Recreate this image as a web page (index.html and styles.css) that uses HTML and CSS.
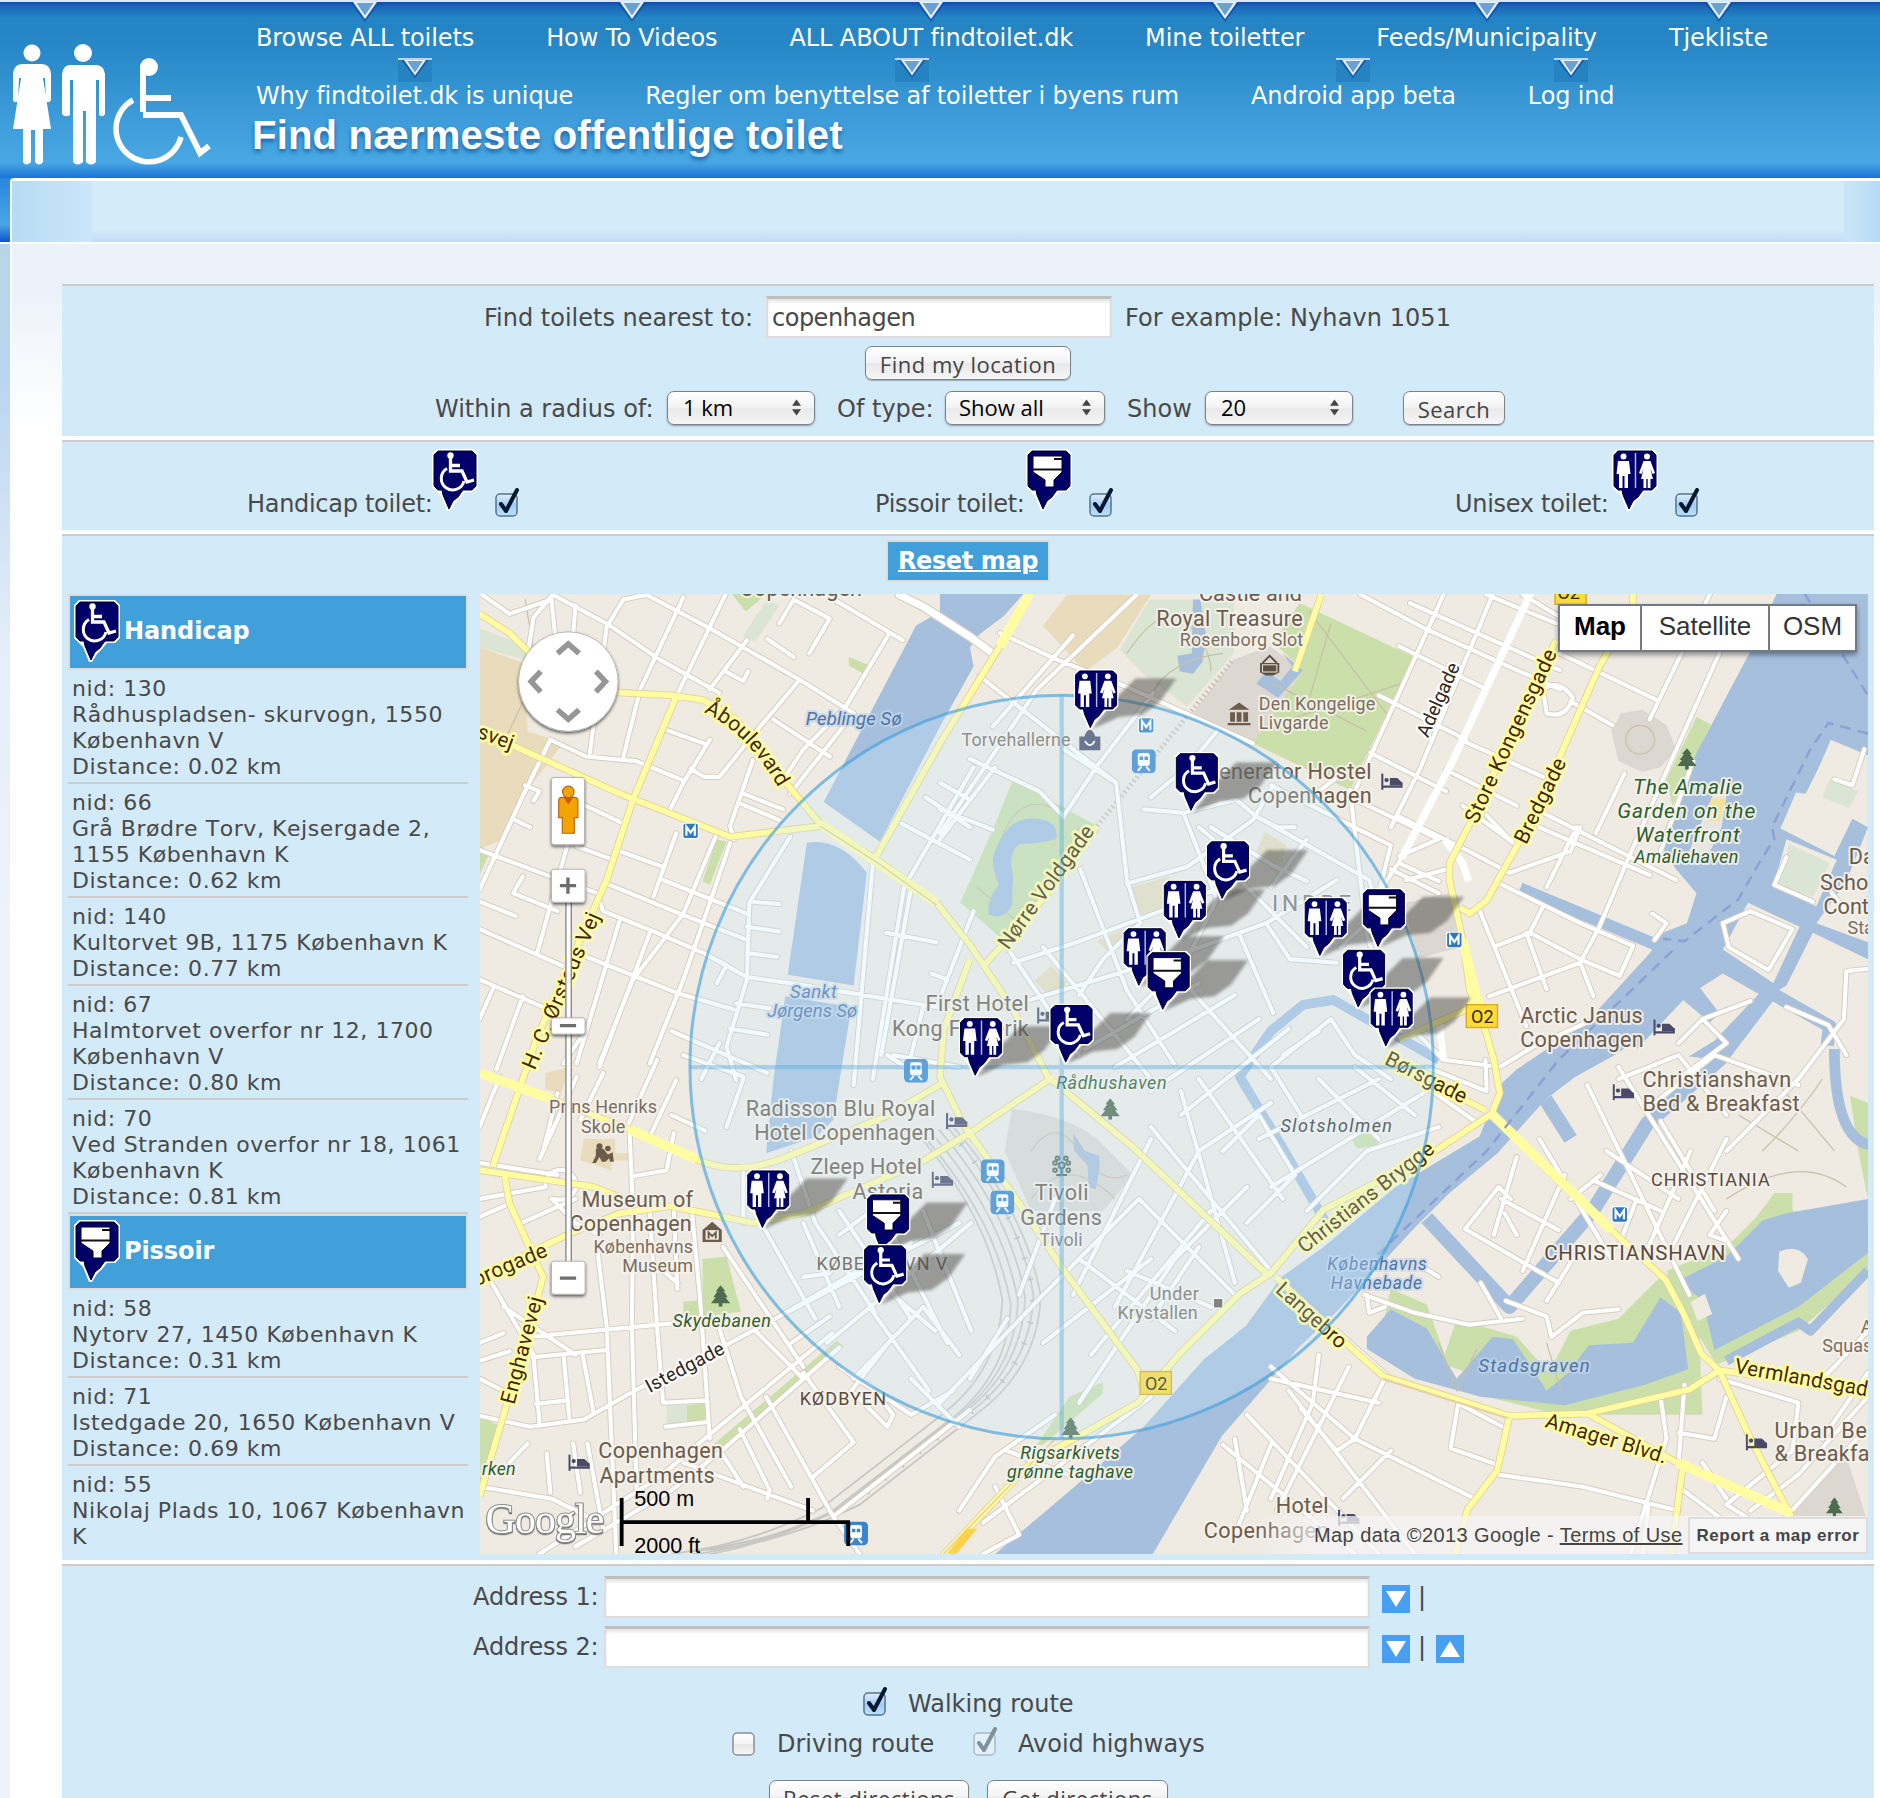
FILE: index.html
```html
<!DOCTYPE html>
<html lang="da">
<head>
<meta charset="utf-8">
<title>Find nærmeste offentlige toilet</title>
<link rel="stylesheet" href="styles.css">
</head>
<body>
<svg class="defs" width="0" height="0" aria-hidden="true">
  <defs>
    <linearGradient id="gloss" x1="0" y1="0" x2="0" y2="1"><stop offset="0" stop-color="#fff"/><stop offset=".5" stop-color="#f4f4f4"/><stop offset=".52" stop-color="#e8e8e8"/><stop offset="1" stop-color="#f7f7f7"/></linearGradient>
    <linearGradient id="aqua" x1="0" y1="0" x2="0" y2="1"><stop offset="0" stop-color="#e2effb"/><stop offset=".5" stop-color="#a3cdf3"/><stop offset="1" stop-color="#b9e2fb"/></linearGradient>
    <symbol id="pin" viewBox="0 0 46 62">
      <path d="M5 0H41L46 5V38L41 43H33L28 49L23 54L18 62H15L9 47L5 43L0 38V5Z" fill="#fff"/>
      <path d="M6 2H40L44 6V37L40 41H31L26 48L21 52L17 60L11 46L10 41H6L2 37V6Z" fill="#000068" stroke="#00001c" stroke-width="1"/>
    </symbol>
    <symbol id="pin-h" viewBox="0 0 46 62">
      <use href="#pin"/>
      <circle cx="18.500" cy="6.500" r="3.200" fill="#fff"/>
      <path d="M18.500 8V22H30L35 33L42 31M18.500 16.500H28" fill="none" stroke="#fff" stroke-width="3.300"/>
      <path d="M15 19.500A11.500 11.500 0 1 0 32 32" fill="none" stroke="#fff" stroke-width="3"/>
    </symbol>
    <symbol id="pin-p" viewBox="0 0 46 62">
      <use href="#pin"/>
      <path d="M7 7H36V23L28 31V38H19V31L7 23Z" fill="#fff" stroke="#00001c" stroke-width="1"/>
      <path d="M7 20.500H36M28 10H36" stroke="#111" stroke-width="2"/>
    </symbol>
    <symbol id="pin-u" viewBox="0 0 46 62">
      <use href="#pin"/>
      <path d="M23.500 4V39" stroke="#b9b9e0" stroke-width="1.500"/>
      <g fill="#fff"><circle cx="11.500" cy="7.500" r="3"/><path d="M6 12H17L18.500 25H16V39H12.500V27H10.500V39H7V25H4.500Z"/>
      <circle cx="35" cy="7.500" r="3"/><path d="M31.500 12H38.500L43 24L40.500 25L38.500 20L41 30H38.500V39H35.700V30H34.300V39H31.500V30H29L31.500 20L29.500 25L27 24Z"/></g>
    </symbol>
    <symbol id="shadow" viewBox="0 0 80 50"><path d="M2 48L14 32L24 20L38 6H72L58 26L44 36L24 38Z" fill="#3c3a36" opacity=".45" filter="url(#soft)"/></symbol>
    <filter id="soft"><feGaussianBlur stdDeviation="1.300"/></filter>
    <filter id="drop" x="-20%" y="-20%" width="140%" height="150%"><feDropShadow dx="0" dy="1.500" stdDeviation="1.500" flood-opacity=".6"/></filter>
    <symbol id="check-on" viewBox="0 0 26 30"><rect x="1" y="6" width="21" height="22" rx="4" fill="url(#aqua)" stroke="#5a7390" stroke-width="1.500"/><path d="M6 16L11 23L22 2" fill="none" stroke="#04182f" stroke-width="4" stroke-linecap="round" stroke-linejoin="round"/></symbol>
    <symbol id="check-dim" viewBox="0 0 26 30"><rect x="1" y="6" width="21" height="22" rx="4" fill="#e3f0f8" stroke="#a9bac5" stroke-width="1.500"/><path d="M6 16L11 23L22 2" fill="none" stroke="#7f929e" stroke-width="4" stroke-linecap="round" stroke-linejoin="round"/></symbol>
    <symbol id="check-off" viewBox="0 0 26 30"><rect x="1" y="6" width="21" height="22" rx="4" fill="url(#gloss)" stroke="#8b8f93" stroke-width="1.500"/></symbol>
    <symbol id="updown" viewBox="0 0 10 18"><path d="M0 7L5 0L10 7ZM0 11L5 18L10 11Z" fill="#444"/></symbol>
    <symbol id="nav-tip" viewBox="0 0 34 24"><path d="M2 0H32L17 20Z" fill="#0f4fa8" opacity=".7"/><path d="M5 0H29L17 17Z" fill="#e9f1fa"/><path d="M8.500 1H25.500L17 13.500Z" fill="#6c9fd2"/></symbol>
    <symbol id="bed" viewBox="0 0 20 15"><path d="M1 0V15M1 12H19V8" fill="none" stroke="#4a4a68" stroke-width="2"/><circle cx="5" cy="6" r="2" fill="#4a4a68"/><path d="M8 4H15L19 8V11H8Z" fill="#4a4a68"/></symbol>
    <symbol id="tree" viewBox="0 0 16 18"><path d="M8 0L12 5H10.500L14 10H12L16 15H9.500V18H6.500V15H0L4 10H2L5.500 5H4Z" fill="#4d6b4e"/></symbol>
    <symbol id="metro" viewBox="0 0 14 14"><rect width="14" height="14" rx="2" fill="#fff"/><rect x="1" y="1" width="12" height="12" rx="1.500" fill="#3079c0"/><path d="M3.500 11V3.500L7 8.500L10.500 3.500V11" fill="none" stroke="#fff" stroke-width="1.800"/></symbol>
    <symbol id="train" viewBox="0 0 20 20"><rect width="20" height="20" rx="4" fill="#3a86cc"/><rect x="5" y="3" width="10" height="11" rx="2" fill="#fff"/><path d="M6.500 6H9.400V9H6.500ZM10.600 6H13.500V9H10.600Z" fill="#3a86cc"/><path d="M5 18L8 14.500M15 18L12 14.500" stroke="#fff" stroke-width="1.600"/></symbol>
  </defs>
</svg>

<div class="page">
  <header class="header">
    <svg class="logo" width="206" height="124" viewBox="0 0 206 124" fill="#fff">
      <circle cx="24" cy="9" r="8.500"/>
      <path d="M14 20H34Q42 20 43 30V56Q41 60 38 57L37 34H35L43 85H35V118Q31 123 27 118V86H23V118Q18 123 15 118V85H5L13 34H11L10 57Q6 60 5 56V30Q6 20 14 20Z"/>
      <circle cx="75" cy="9" r="9"/>
      <path d="M61 21H89Q96 22 97 30V70Q95 74 91 71V36H88V118Q83 123 78 118V67H75V118Q69 123 65 118V36H62V71Q57 74 54 70V30Q55 22 61 21Z"/>
      <circle cx="141" cy="23" r="9"/><path d="M132 22H138V68H132Z"/>
      <path d="M135 54H163M135 71H173L192 109L201 102" fill="none" stroke="#fff" stroke-width="6"/>
      <path d="M125 56A33 33 0 1 0 173 93" fill="none" stroke="#fff" stroke-width="5.500"/>
    </svg>
    <div class="head-main">
      <nav class="nav">
        <ul class="nav-row first">
          <li><svg><use href="#nav-tip"/></svg>Browse ALL toilets</li><li><svg><use href="#nav-tip"/></svg>How To Videos</li><li><svg><use href="#nav-tip"/></svg>ALL ABOUT findtoilet.dk</li><li><svg><use href="#nav-tip"/></svg>Mine toiletter</li><li><svg><use href="#nav-tip"/></svg>Feeds/Municipality</li><li><svg><use href="#nav-tip"/></svg>Tjekliste</li>
        </ul>
        <ul class="nav-row second">
          <li><svg><use href="#nav-tip"/></svg>Why findtoilet.dk is unique</li><li><svg><use href="#nav-tip"/></svg>Regler om benyttelse af toiletter i byens rum</li><li><svg><use href="#nav-tip"/></svg>Android app beta</li><li><svg><use href="#nav-tip"/></svg>Log ind</li>
        </ul>
      </nav>
      <h1>Find nærmeste offentlige toilet</h1>
    </div>
  </header>
  <div class="band"><div class="band-panel"><i class="corner-l"></i><i class="corner-r"></i></div></div>

  <main class="content">
    <div class="content-panel">
      <section class="box search">
        <div class="row r1"><label>Find toilets nearest to:</label><input class="field near" value="copenhagen"><span class="hint">For example: Nyhavn 1051</span></div>
        <div class="row r2"><button class="btn locate">Find my location</button></div>
        <div class="row r3">
          <label class="l-radius">Within a radius of:</label><span class="select">1 km<svg><use href="#updown"/></svg></span>
          <label class="l-type">Of type:</label><span class="select wide">Show all<svg><use href="#updown"/></svg></span>
          <label class="l-show">Show</label><span class="select">20<svg><use href="#updown"/></svg></span>
          <button class="btn go">Search</button>
        </div>
      </section>

      <section class="box types">
        <div class="type t1"><label>Handicap toilet:</label><svg class="pin"><use href="#pin-h"/></svg><svg class="check"><use href="#check-on"/></svg></div>
        <div class="type t2"><label>Pissoir toilet:</label><svg class="pin"><use href="#pin-p"/></svg><svg class="check"><use href="#check-on"/></svg></div>
        <div class="type t3"><label>Unisex toilet:</label><svg class="pin"><use href="#pin-u"/></svg><svg class="check"><use href="#check-on"/></svg></div>
      </section>

      <section class="box mapbox">
        <div class="reset-row"><a class="reset">Reset map</a></div>
        <div class="split">
          <div class="list">
            <h2><svg class="pin"><use href="#pin-h"/></svg>Handicap</h2>
            <div class="item">nid: 130<br>Rådhuspladsen- skurvogn, 1550<br>København V<br>Distance: 0.02 km</div>
            <div class="item">nid: 66<br>Grå Brødre Torv, Kejsergade 2,<br>1155 København K<br>Distance: 0.62 km</div>
            <div class="item">nid: 140<br>Kultorvet 9B, 1175 København K<br>Distance: 0.77 km</div>
            <div class="item">nid: 67<br>Halmtorvet overfor nr 12, 1700<br>København V<br>Distance: 0.80 km</div>
            <div class="item">nid: 70<br>Ved Stranden overfor nr 18, 1061<br>København K<br>Distance: 0.81 km</div>
            <h2><svg class="pin"><use href="#pin-p"/></svg>Pissoir</h2>
            <div class="item">nid: 58<br>Nytorv 27, 1450 København K<br>Distance: 0.31 km</div>
            <div class="item">nid: 71<br>Istedgade 20, 1650 København V<br>Distance: 0.69 km</div>
            <div class="item">nid: 55<br>Nikolaj Plads 10, 1067 København<br>K<br>Distance: 0.81 km</div>
          </div>
          <div class="map">
            <svg class="tiles" viewBox="400.350 495.450 1157.700 800.700" preserveAspectRatio="none">
              <rect x="400" y="495" width="1160" height="803" fill="#efeae2"/>
              <!-- built-up blocks and schools -->
              <g fill="#e8dcbc">
                <path d="M400 540L437 553L440 610L470 620L436 664L420 700L400 708Z"/><path d="M890 496H960L932 540L905 560L870 522Z"/>
                <path d="M455 895L475 890L468 912L455 908Z"/><path d="M487 950H513V962H524V968H510V976L484 968Z"/>
                <path d="M944 740L975 731L980 762L950 763ZM915 785L948 770V780L925 794ZM863 818L877 806L890 820L876 832ZM1055 694L1073 705L1066 730L1047 712Z"/>
              </g>
              <g fill="#dcd7d0">
                <path d="M1029 550L1059 539L1087 559L1045 620L995 595Z"/><path d="M1344 610L1352 595L1370 592L1390 605L1398 625L1385 640L1370 644L1350 635Z"/>
                <path d="M1172 753L1209 745L1218 790L1180 800Z"/><path d="M844 925Q890 930 915 950L945 980L920 1010L860 1010L838 960Z"/><path d="M1540 1215L1558 1270V1296H1490V1260Z"/>
              </g>
              <!-- parks -->
              <g fill="#cadfaa">
                <path d="M845 650L915 689L840 787L801 753L828 692Z"/><path d="M1084 503L1179 548L1126 659L1045 620L1087 559L1062 536Z"/>
                <path d="M586 1050L606 1048L618 1094L570 1100V1086L586 1084Z"/><path d="M573 1172L588 1170V1186L573 1187Z"/>
                <path d="M1415 598L1427 604L1395 672L1390 650Z"/><path d="M610 495H640L622 510Z"/><path d="M598 700L606 702L592 738L586 735Z"/>
                <path d="M708 548L725 555L720 562L708 555Z"/><path d="M400 705L408 712L400 730Z"/><path d="M400 1181L418 1190L404 1240H400Z"/>
                <path d="M1134 934L1146 940L1150 955L1132 958L1126 948Z"/><path d="M700 875L695 893L660 895Z"/><path d="M892 1165L920 1153V1162L870 1205H865Z"/>
                <path d="M1543 914L1558 920V1000L1550 960Z"/><path d="M1160 1075L1190 1088L1205 1130L1215 1100L1265 1115L1292 1145L1310 1110L1350 1100L1385 1065L1415 1055L1420 1180L1300 1180L1240 1165V1150L1150 1120Z"/>
                <path d="M1390 1060L1440 1040L1465 1015L1480 995H1495V1010L1558 1020V1060L1500 1110L1432 1138L1408 1100Z"/>
                <path d="M698 1118L704 1123L600 1208L596 1204Z"/>
              </g>
              <g fill="#dae5d3"><path d="M959 500L1029 500L1029 545L990 589L956 564L934 542Z"/><path d="M400 524L437 538V550L400 540Z"/><path d="M640 500L650 505L630 535L620 530Z"/><path d="M556 1172H573V1187H556Z"/></g>
              <!-- water -->
              <g fill="#a5bfdd">
                <path d="M784 495V510L764 522L687 669L734 702L784 606L812 556L809 540L817 529L837 514L854 495Z"/>
                <path d="M673 703Q700 698 723 728L712 822L657 813Z"/><path d="M655 831L710 840L695 934L681 948L639 962L645 901Z"/>
                <path d="M828 716Q838 680 865 683Q884 685 881 700Q865 704 850 704Q840 712 845 730L844 755Q838 768 825 763Q822 752 833 738Q828 726 828 716Z"/>
                <path d="M1001 500L1006 530L1003 552L995 562L984 560L982 547L994 545L995 500Z"/>
                <path d="M1070 545L1087 559L1066 582L1048 570L1056 560L1068 568L1078 556Z"/>
                <path d="M895 945L905 960L917 964V975L914 992L908 990L907 972L896 960Z"/>
                <path d="M1482 495H1558V800L1512 778L1490 822L1471 834L1458 853L1430 884L1400 880L1357 873L1345 881L1314 898L1289 917L1249 962L1209 995L1181 1023L1114 1095L1084 1123L1019 1198L961 1297H829L894 1242L954 1190L1004 1134L1039 1106L1069 1065L1104 1040L1164 990L1234 948L1251 905L1265 892L1323 853L1376 795L1387 778L1407 770L1415 745L1398 725L1384 703L1415 628L1459 545Z"/>
                <path d="M1140 1115L1160 1092L1190 1108L1215 1150L1245 1115L1262 1117L1290 1160L1308 1145L1325 1122L1362 1120L1385 1082L1402 1095L1408 1142L1372 1155L1305 1172L1235 1165L1180 1150L1140 1125Z"/>
                <path d="M1400 1068L1440 1048L1470 1018L1490 1012L1558 1000V1045L1500 1090L1430 1126L1420 1085Z"/>
              </g>
              <g fill="none" stroke="#a5bfdd" stroke-linejoin="round">
                <path d="M1268 741L1384 789" stroke-width="10"/><path d="M1200 884L1112 834L1087 838L1060 860L1034 898L1069 956L1106 1020" stroke-width="8"/>
                <path d="M1478 826L1434 884L1374 937L1329 1009L1259 1090L1190 1016" stroke-width="12"/><path d="M1470 824L1526 856L1524 872" stroke-width="11"/>
                <path d="M1289 917L1310 950" stroke-width="12"/><path d="M1530 875Q1530 950 1560 955" stroke-width="9"/><path d="M1440 1135L1500 1103L1510 1110L1558 1060" stroke-width="8"/>
              </g>
              <g fill="#efeae2">
                <path d="M1527 617L1558 630V690L1545 683L1530 714L1485 691L1498 661L1506 662L1518 638Z"/><path d="M1490 700L1532 717L1515 756L1479 740Z"/>
                <path d="M1558 690L1540 735L1515 770L1558 786Z"/><path d="M1458 753L1501 773L1479 820L1437 792Z"/><path d="M1418 824L1437 812L1467 829L1430 868L1404 884L1357 884L1404 834L1426 853L1434 845Z"/>
                <path d="M1484 1044Q1500 1037 1508 1050L1502 1070L1492 1074L1483 1060ZM1410 1086L1422 1079L1428 1096L1416 1102Z"/>
                <path d="M1430 660L1442 650L1436 690L1424 715L1408 712Z" opacity=".9"/>
              </g>
              <g fill="#dae5d3"><path d="M1492 704L1526 720L1512 748L1483 738Z"/><path d="M1526 650L1550 660L1542 674L1520 665Z"/></g>
              <path d="M1427 666L1440 666L1434 685H1425Z" fill="#f3e39a"/>
              <!-- railway -->
              <g fill="none" stroke="#c9c7c3" stroke-width="1.500">
                <path id="rail" d="M790 940Q850 1010 862 1080Q860 1140 809 1178L711 1254Q650 1285 586 1292"/>
                <use href="#rail" x="-7" y="2"/><use href="#rail" x="-13" y="5"/><use href="#rail" x="-19" y="8"/><use href="#rail" x="6" y="1"/><use href="#rail" x="-26" y="4"/>
              </g>
              <path d="M790 940Q850 1010 862 1080Q860 1140 809 1178L711 1254" fill="none" stroke="#bcbab6" stroke-width="5" stroke-dasharray="1.200 17"/>
              <g fill="none" stroke="#c9c2ba" stroke-width="4" stroke-dasharray="1.500 2.500"><path d="M915 689L1029 550"/></g>
              <g fill="none" stroke="#c9bfa9" stroke-width="1"><path d="M1092 510L1160 600M1062 570L1140 610M1075 600L1170 570M1110 520L1090 590M940 545Q970 500 990 520T1010 560M960 580Q975 550 1020 545M835 700Q850 660 880 675M835 780Q880 740 900 690M815 740L850 770M1200 1120L1215 1160L1232 1125M1290 1120L1302 1160M860 960Q880 930 900 960T940 980M860 1000Q890 960 930 1000M438 500L448 560L420 620M1450 930L1500 960M1440 1000Q1500 960 1540 990M1480 900L1530 960M1470 960Q1500 930 1520 900"/><circle cx="1368" cy="617" r="12"/></g>
              <!-- minor streets: casing first, then the white roadway -->
              <defs><path id="streets" d="M461 496L506 520L550 550L600 578M539 496L592 524L667 567L712 595M692 498L753 534M520 500L506 523L492 628M570 498L534 575L520 631M605 496L564 581M623 534L592 575M742 528L705 590L670 625L650 655M712 595L659 662M667 567L634 606L600 648L587 648L576 641M628 634L609 689L612 700M459 617L489 631L531 635L570 651M556 609L587 620M645 600L692 631M620 662L653 675M617 670L650 684M592 617L570 653L559 675M392 706L459 731L498 745M506 737L567 762L623 784M481 706L511 717M514 709L553 723M553 734L623 762M400 775L470 806M498 745L503 760L548 778L587 795L623 815L659 820L781 840M489 798L564 828L612 842M400 817L453 840M459 617L436 664L400 742M473 706L448 795M564 695L545 748M598 695L570 762L528 817L500 887M609 703L589 762L570 817L542 887M517 767L481 887M542 778L500 890M436 831L414 892M412 823L400 850M436 731L428 745L465 760M400 752L430 764M430 684L442 690M438 655L450 660L445 668M402 496L425 512L460 500L463 530M480 505L478 530M438 560L445 515L461 496M484 670L520 687M540 496L520 500M650 520L662 500L692 516L675 545M662 548L640 533M605 560L620 568L624 560M659 698L625 753L623 817L606 873L614 901M626 752L650 754M623 773L650 777M623 795L648 798M614 837L642 841M609 858L640 863M587 795L606 805L598 820M470 887L488 860M570 880L620 898M600 870L585 900M560 860L640 895M712 1062L760 1040M728 720L712 905M760 740L735 880M812 640L754 740L728 900M784 653L809 667M772 665L809 690M752 687L809 717M739 778L781 786M812 760L781 840M777 812L790 817M770 840L760 880M745 880L800 890M740 880L770 900M834 528L881 550L940 573L1045 620M817 564L931 653L940 734L951 770M948 496L865 575L784 695M895 530L828 606M962 578L915 639L887 681M1015 610L990 640L960 665M887 625L931 653M809 633L867 660L887 681M784 675L828 692M954 675L987 678L1031 667L1048 681L1142 734M940 737L990 723L1045 684L1062 655M845 803L895 787L979 756L1034 734M859 834L979 798L1056 770L1115 734M987 678L1015 750M901 725L940 826L979 887M830 640L784 700M840 790L900 880M870 790L960 900M1034 780L1062 845M1056 770L1076 800L1115 803M1000 690L1012 700M951 770L920 800L900 830M1034 734L1090 790M1015 750L990 800L940 850M1090 700L1060 740M970 800L1060 900M905 875L1000 820M930 890L1030 830M960 910L1050 850M985 930L1075 858M1010 690L1062 722L1090 735M1048 681L1066 690L1080 690M1142 734L1150 760L1118 790M1126 659L1140 780L1160 840L1204 884M1100 660L1126 640M1060 655L1150 700M1126 665L1200 700L1167 714M1129 690L1160 705L1150 745M1160 725L1200 745M1204 496L1130 660M1276 496L1212 634L1170 714L1140 760M1245 496L1185 640L1160 690M1426 496L1376 600M1434 545L1387 650L1359 714L1334 773L1318 803M1412 635L1384 713M1355 645L1331 695M1167 539L1240 575M1135 496L1190 525L1301 575M1176 503L1301 559M1240 496L1298 520M1270 496L1310 520M1301 545L1382 584M1310 585L1345 605M1218 617L1287 648M1206 642L1265 672M1150 580L1223 617M1143 628L1206 660M1167 681L1223 709L1259 728M1167 720L1200 735M1287 678L1398 734M1284 690L1376 730M1251 737L1318 770L1362 789L1351 814M1234 759L1273 856M1273 778L1290 825M1248 789L1276 778L1287 756M1242 831L1318 803M1276 778L1320 801L1351 814M1318 803L1329 831M1173 734L1207 725M1204 884L1251 890L1279 873L1334 848M1259 728L1310 710L1318 690M1315 690L1290 740M1378 762L1390 770L1380 784M1220 672L1265 705M1259 700L1240 680M1287 575Q1300 565 1312 582Q1306 600 1290 595Z M1437 770L1442 790L1475 809L1495 775L1460 760ZM1530 650L1545 655L1555 625M1490 715L1480 738L1512 752M1558 750L1540 760L1528 745M1400 870L1420 850L1460 835M1490 840L1525 855L1540 880M1558 808L1540 810L1538 850L1500 900L1440 960M1400 900L1440 870L1420 850M1380 920L1430 880L1500 905M1350 900L1400 880L1440 930M1324 905L1409 1080M1284 950L1344 1050M1350 890L1450 1050M1385 935L1430 1010M1265 965L1246 1030M1305 980L1270 1060M1335 980L1310 1000M1255 1012L1265 1030M1252 1000L1300 1026M1340 960L1400 1000M1330 985L1385 1010M1260 1000L1250 990L1222 1025L1300 1070M1312 1050L1290 1085M1365 1000L1350 1040M1410 960L1375 1040M1440 950L1395 1040M1440 1010L1426 1030L1440 1035M1184 1055L1200 1065M1138 1080L1180 1095L1225 1105L1270 1100M1140 1080L1142 1095L1155 1090M1115 1110L1160 1150M1256 1085L1290 1098L1294 1115L1320 1095L1350 1092M1235 1070L1252 1100M1060 1150L1150 1170M1100 1130L1095 1170L1060 1250M1125 1140L1065 1260M1155 1150L1130 1200L1115 1210L1085 1175M1020 1205L1130 1296M1040 1180L1150 1296M1060 1140L1130 1200L1230 1250M1075 1160L1180 1296M1030 1200L1040 1260M1060 1205L1030 1280M1216 1172L1210 1208L1250 1222M1219 1172L1253 1190M1250 1230L1320 1240L1400 1260M1375 1256L1370 1296M1160 1210L1120 1250M1434 1150L1500 1170L1495 1210L1440 1255L1480 1280M1385 1165L1390 1200L1360 1296M1405 1155L1400 1220M1440 1165L1430 1200L1400 1195M1558 1165L1500 1230L1460 1260M1558 1110L1530 1140L1515 1155M1558 1190L1490 1265M1420 1220L1440 1250M1400 1240L1440 1270M1558 1145L1520 1200M498 1040L506 1106L514 1296M525 942L528 1009L527 1106L531 1245M542 1012L548 1106L553 1170M562 1009L565 1075M577 1009L584 1084L592 1200M603 1040L670 1140M442 1115L559 1104M444 1132L506 1126M447 1171L473 1168M400 1181L442 1190L487 1184L531 1159L609 1120L650 1098L712 1062L760 1036M445 1132L450 1187M470 1130L475 1184M486 1130L495 1178M700 1124L602 1210L560 1243L480 1290M694 1112L590 1198L550 1232L450 1296M400 1240L460 1250L490 1265M456 1212L459 1245M478 1204L484 1245M490 1204L503 1275M553 1170L590 1168M555 1190L590 1186M670 1145L712 1203L678 1232M617 1192L642 1243L640 1250M598 1206L620 1240M570 1220L678 1260M639 1165L695 1265L717 1296M695 1265L809 1176M600 1108L618 1165L660 1240M630 1110L670 1150M481 898L450 967M503 895L484 934M548 884L523 940M564 901L542 948M528 981L556 976L562 945M400 970L465 980M455 990L400 1000M400 1015L425 1004M435 1020L480 1000M417 898L400 940M465 912L453 960M420 1090L480 1130M400 1150L420 1160M440 1204L425 1220M400 1120L420 1112M400 1135L425 1127M410 1070L445 1130M553 1060L565 1070M500 1030L480 1020L460 1000M455 990Q455 975 470 976Q482 980 480 992Q475 1003 462 1000M606 940L620 900M560 930L588 943M620 978V1020M635 1020L680 1100M660 960L680 1020L730 1095M700 1010L760 1100M670 1020L700 1090M650 1098L800 1020M690 1120L810 1020M692 1062L670 1065M700 1030L740 1000M740 1020L790 1120M770 1010L810 1110M712 1150L770 1090L800 1130M725 1090L775 1160M745 1080L780 1110M660 1120L692 1098M700 1140L760 1180L795 1160M745 1115L710 1160L740 1190L745 1180L725 1155M760 1150L800 1190M809 1150L840 1100M784 1170L870 1080L950 1000M870 1120L960 1050M880 1000L850 1080M895 1080L960 950M910 1130L1010 1010M930 1090L1000 960L1060 920M960 940L1060 1060M985 910L1030 1070M1000 900L1070 1000M1020 960L1050 930L1080 980L1040 1020M940 1060L1010 1090M950 1000L1030 1080M900 1050L980 1110M980 1050L1040 990M960 1100L1000 1040M1050 950L1150 900M1060 990L1190 910M1085 930L1060 890L1110 850L1130 880L1160 900M1090 1010L1140 960L1200 940M1100 900L1150 950M1130 890L1180 930M1070 880L1100 860M900 1170L980 1050M820 1270L960 1165M830 1240L850 1280L820 1296M800 1260L830 1215L880 1180M840 1210L890 1230M1190 890L1240 910L1239 884M1180 900L1230 935"/></defs>
              <g fill="none" stroke-linecap="round" stroke-linejoin="round">
                <use href="#streets" stroke="#d5cdc1" stroke-width="5"/><use href="#streets" stroke="#fff" stroke-width="3.400"/>
                <path d="M750 496L770 506L809 531L828 545" stroke="#d8d1c6" stroke-width="8"/><path d="M750 496L770 506L809 531L828 545M1276 496L1212 634L1170 714" stroke="#fff" stroke-width="6"/>
              </g>
              <path d="M1205 700L1220 720L1225 735M1204 884L1200 850" stroke="#fff" stroke-width="6" fill="none"/>
              <!-- primary roads -->
              <defs><path id="major" d="M400 512L425 528L445 548M505 577L560 580L587 584L614 600L653 650L684 687L731 717L781 753L809 788L845 842L874 898L944 956L1059 1065M400 609L448 631L517 662L609 698L684 689M564 581L528 667L506 734L448 865L434 906L411 973M859 495L834 539L784 620L731 714M915 689L870 750L820 806M809 800L787 859L784 898L803 937L844 995L889 1062L949 1143L955 1165M400 895L461 917L525 942L581 967Q614 982 656 965L739 931L787 903M400 976L495 990L520 1000M400 1065L475 1029L517 1012L559 1006L628 1020L670 1012L767 970L809 945L834 928L879 898M421 981L425 1004L453 1065L448 1084L423 1170L400 1248M784 1300L860 1220L949 1170L984 1129L1034 1079L1060 1062L1104 1009L1194 962L1244 929L1251 912L1246 884L1237 853L1226 826L1220 784L1209 734V720L1226 687L1298 534M1362 495V506L1334 556L1301 631L1265 706L1240 751L1226 762L1218 757M1154 884L1239 926M1167 867L1223 842L1231 826M1244 929L1299 984L1344 1026L1389 1067L1404 1095L1419 1129L1434 1143L1558 1160M1434 1143L1460 1200L1494 1265M1064 1065L1129 1126L1154 1148L1259 1181L1324 1179L1409 1159L1434 1143M1324 1179L1399 1220L1494 1262M1259 1181L1249 1226L1224 1259L1214 1296M1404 1220L1394 1296M1102 496L1080 560"/></defs>
              <g fill="none" stroke-linejoin="round"><use href="#major" stroke="#e3cf9c" stroke-width="6.200"/><use href="#major" stroke="#fffca1" stroke-width="4.800"/></g>
              <g fill="none" stroke="#fffca1" stroke-width="8"><path d="M1220 784L1231 830L1240 855M400 895L461 917M525 942L581 967M1244 929L1344 1026M684 687L781 753M1399 1220L1494 1262M859 495L834 539"/></g>
              <path d="M684 689L731 719L781 755M787 1296L880 1200M1154 1150L1259 1183" fill="none" stroke="#e3cf9c" stroke-width="1.200"/>
              <path d="M790 1296L806 1275H815L798 1296Z" fill="#fcd24c"/>
              <path d="M1558 612L1525 603L1510 625L1478 690L1480 700L1470 715L1450 750L1405 785L1387 783M1395 793L1300 884L1240 960L1140 1055M1505 495L1558 580" fill="none" stroke="#8e9fd6" stroke-width="2" stroke-dasharray="9 6"/>

              <!-- place labels -->
              <g class="lbl big">
                <text x="617" y="497" textLength="102">Copenhagen</text><text x="1000" y="501" textLength="86">Castle and</text><text x="964.500" y="522" textLength="122">Royal Treasure</text>
                <text x="1017" y="650" textLength="127">enerator Hostel</text><text x="1041" y="670" textLength="103">Copenhagen</text>
                <text x="772" y="843" textLength="86">First Hotel</text><text x="744" y="864" textLength="114">Kong Frederik</text>
                <text x="622" y="931" textLength="158">Radisson Blu Royal</text><text x="629" y="951" textLength="151">Hotel Copenhagen</text>
                <text x="676" y="979" textLength="93">Zleep Hotel</text><text x="711" y="1000" textLength="59">Astoria</text>
                <text x="485" y="1007" textLength="93">Museum of</text><text x="475" y="1027" textLength="102">Copenhagen</text>
                <text x="863" y="1001" textLength="45">Tivoli</text><text x="851" y="1022" textLength="68">Gardens</text>
                <text x="499" y="1216" textLength="104">Copenhagen</text><text x="500" y="1237" textLength="96">Apartments</text>
                <text x="1064" y="1262" textLength="44">Hotel</text><text x="1004" y="1283" textLength="104">Copenhagen</text>
                <text x="1268" y="853" textLength="102">Arctic Janus</text><text x="1268" y="873" textLength="103">Copenhagen</text>
                <text x="1370" y="907" textLength="124">Christianshavn</text><text x="1370" y="927" textLength="131">Bed &amp; Breakfast</text>
                <text x="1480" y="1199" textLength="88">Urban Bed</text><text x="1480" y="1219" textLength="95">&amp; Breakfast</text>
                <text x="1542" y="721">Danish</text><text x="1518" y="742">School of</text><text x="1521" y="762">Contem</text>
              </g>
              <g class="lbl small">
                <text x="984" y="539" textLength="103">Rosenborg Slot</text><text x="1050" y="592" textLength="97">Den Kongelige</text><text x="1050" y="608" textLength="58">Livgarde</text>
                <text x="802" y="622" textLength="91">Torvehallerne</text><text x="458" y="928" textLength="90">Prins Henriks</text><text x="484.500" y="945" textLength="37">Skole</text>
                <text x="495" y="1045" textLength="83">Københavns</text><text x="519" y="1061" textLength="59">Museum</text><text x="867" y="1039" textLength="36">Tivoli</text>
                <text x="959" y="1084" textLength="41">Under</text><text x="932" y="1100" textLength="67">Krystallen</text><text x="1541" y="779">Stati</text><text x="1552" y="1112">A</text><text x="1520" y="1128">Squash</text>
              </g>
              <g class="lbl area">
                <text x="1061" y="760" textLength="66" font-size="19" fill="#777">INDRE</text><text x="681" y="1059" textLength="109" font-size="15">KØBENHAVN V</text><text x="667" y="1172" textLength="72" font-size="15">KØDBYEN</text>
                <text x="1377" y="989" textLength="99" font-size="15">CHRISTIANIA</text><text x="1288" y="1051" textLength="151" font-size="17">CHRISTIANSHAVN</text>
              </g>
              <g class="lbl green">
                <text x="1362" y="662" textLength="91" font-size="17.500">The Amalie</text><text x="1349" y="682" textLength="115" font-size="17.500">Garden on the</text><text x="1364" y="702" textLength="87" font-size="17.500">Waterfront</text><text x="1363" y="720" textLength="87">Amaliehaven</text>
                <text x="881" y="908" textLength="92">Rådhushaven</text><text x="561" y="1107" textLength="82">Skydebanen</text><text x="402" y="1230" textLength="28">rken</text><text x="851" y="1217" textLength="83">Rigsarkivets</text><text x="840" y="1233" textLength="105">grønne taghave</text>
                <text x="1068" y="944" textLength="93" fill="#333">Slotsholmen</text>
              </g>
              <g class="lbl sea">
                <text x="672" y="605" textLength="80">Peblinge Sø</text><text x="659" y="832" textLength="39">Sankt</text><text x="640" y="848" textLength="75">Jørgens Sø</text>
                <text x="1107" y="1059" textLength="83" font-size="14.500">Københavns</text><text x="1110" y="1075" textLength="76" font-size="14.500">Havnebade</text><text x="1233" y="1144" textLength="93">Stadsgraven</text>
              </g>
              <g class="lbl road">
                <defs><path id="abou" d="M587 594Q625 612 652 662"/></defs>
                <text textLength="90"><textPath href="#abou">Åboulevard</textPath></text>
                <text transform="translate(397 615) rotate(20)" textLength="31">svej</text>
                <text transform="translate(446 893) rotate(-67)" textLength="140">H. C. Ørsteds Vej</text>
                <text transform="translate(841 793) rotate(-54)" textLength="123">Nørre Voldgade</text>
                <text transform="translate(1232 688) rotate(-65)" textLength="158">Store Kongensgade</text>
                <text transform="translate(1273 705) rotate(-64)" textLength="77">Bredgade</text>
                <text transform="translate(1154 887) rotate(27)" textLength="74">Børsgade</text>
                <text transform="translate(1088 1046) rotate(-38)" textLength="139">Christians Brygge</text>
                <text transform="translate(1063 1077) rotate(42)" textLength="73">Langebro</text>
                <text transform="translate(1288 1190) rotate(17)" textLength="105">Amager Blvd.</text>
                <text transform="translate(1446 1145) rotate(10)" textLength="122">Vermlandsgade</text>
                <text transform="translate(429 1172) rotate(-75)" textLength="92">Enghavevej</text>
                <text transform="translate(397 1073) rotate(-23)" textLength="66">orogade</text>
              </g>
              <g class="lbl street"><text transform="translate(1191 616) rotate(-66)" textLength="66">Adelgade</text><text transform="translate(542 1162) rotate(-28)" textLength="72">Istedgade</text></g>
              <!-- points of interest -->
              <use href="#bed" x="1152" y="645" width="18" height="14"/><use href="#bed" x="865" y="840" width="18" height="14"/><use href="#bed" x="789" y="928" width="18" height="14"/><use href="#bed" x="777" y="977" width="18" height="14"/><use href="#bed" x="474" y="1213" width="18" height="14"/><use href="#bed" x="1379" y="850" width="18" height="14"/><use href="#bed" x="1345" y="904" width="18" height="14"/><use href="#bed" x="1456" y="1196" width="18" height="14"/><use href="#bed" x="1116" y="1259" width="18" height="14"/>
              <use href="#tree" x="1399" y="624" width="16" height="18"/><use href="#tree" x="918" y="916" width="16" height="18"/><use href="#tree" x="593" y="1072" width="16" height="18"/><use href="#tree" x="885" y="1182" width="16" height="18"/><use href="#tree" x="1523" y="1248" width="14" height="18"/>
              <use href="#metro" x="569" y="686" width="14" height="14"/><use href="#metro" x="949" y="598" width="14" height="14"/><use href="#metro" x="1206" y="777" width="14" height="14"/><use href="#metro" x="1344" y="1006" width="14" height="14"/>
              <use href="#train" x="944" y="625" width="20" height="20"/><use href="#train" x="754" y="883" width="20" height="20"/><use href="#train" x="818" y="967" width="20" height="20"/><use href="#train" x="826" y="993" width="20" height="20"/><use href="#train" x="704" y="1269" width="20" height="20"/>
              <g fill="#6b5c4c"><path d="M1025 592L1033.500 586L1042 592ZM1026 594H1030V602H1026ZM1031.500 594H1035.500V602H1031.500ZM1037 594H1041V602H1037ZM1024 603H1043V605H1024Z"/><path d="M586 1026L594 1019L602 1026V1036H586Z"/><rect x="1012" y="1083" width="8" height="8" stroke="#fff"/>
              <circle cx="500" cy="956" r="2.500"/><circle cx="507" cy="958" r="2.300"/><path d="M497 958H503L507 963L511 961L512 969H509L508 966L505 969H502L500 965L497 970H494L497 964Z"/></g>
              <rect x="588.500" y="1026" width="11" height="8" fill="#efeae2"/><path d="M591 1033V1028L594 1031L597 1028V1033" fill="none" stroke="#6b5c4c" stroke-width="1.600"/>
              <path d="M1053 553L1059 547L1065 553" fill="none" stroke="#5d5141" stroke-width="1.500"/><path d="M1051 553H1067V561L1062 563.500H1056L1051 561Z" fill="#5d5141"/><rect x="1053" y="554.500" width="12" height="6" fill="none" stroke="#efeae2" stroke-width=".8"/>
              <path d="M901 615H917V625H901ZM905 615Q909 604 913 615" fill="#4a4a68" stroke="#4a4a68" stroke-width="1.500"/><path d="M905 618Q909 625 913 618" stroke="#fff" stroke-width="1.500" fill="none"/>
              <g fill="none" stroke="#4d6b5e" stroke-width="1.600"><circle cx="885.500" cy="972" r="2.500"/><circle cx="880" cy="970" r="1.500"/><circle cx="891" cy="970" r="1.500"/><circle cx="882" cy="966" r="1.500"/><circle cx="889" cy="966" r="1.500"/><circle cx="880" cy="976" r="1.500"/><circle cx="891" cy="976" r="1.500"/><path d="M885.500 974V980M881 980H890"/></g>
              <g class="shield"><rect x="1297" y="486" width="26" height="18"/><text x="1299" y="500">O2</text><rect x="1223" y="838" width="26" height="19"/><text x="1227" y="853">O2</text><rect x="951" y="1144" width="26" height="19"/><text x="955" y="1159">O2</text></g>

              <!-- search radius -->
              <circle cx="885.500" cy="890" r="310" fill="#cdecff" fill-opacity=".27" stroke="#3d9fdd" stroke-opacity=".62" stroke-width="2.500"/>
              <path d="M885.500 580V1200M575.500 890H1195.500" stroke="#4ba6e0" stroke-opacity=".38" stroke-width="3.600"/>

              <g>
                <use href="#shadow" x="909" y="560" width="80" height="50"/><use href="#shadow" x="993" y="630" width="80" height="50"/><use href="#shadow" x="1019" y="703" width="80" height="50"/><use href="#shadow" x="983" y="736" width="80" height="50"/><use href="#shadow" x="949" y="775" width="80" height="50"/><use href="#shadow" x="969" y="795" width="80" height="50"/><use href="#shadow" x="1100" y="750" width="80" height="50"/><use href="#shadow" x="1149" y="742" width="80" height="50"/><use href="#shadow" x="1132" y="793" width="80" height="50"/><use href="#shadow" x="1155" y="826" width="80" height="50"/><use href="#shadow" x="888" y="839" width="80" height="50"/><use href="#shadow" x="813" y="850" width="80" height="50"/><use href="#shadow" x="635" y="977" width="80" height="50"/><use href="#shadow" x="735" y="997" width="80" height="50"/><use href="#shadow" x="733" y="1040" width="80" height="50"/>
              </g>
              <g>
                <use href="#pin-u" x="895.500" y="558" width="37.500" height="50.500"/><use href="#pin-h" x="979.500" y="627" width="37.500" height="50.500"/><use href="#pin-h" x="1005.500" y="700.500" width="37.500" height="50.500"/><use href="#pin-u" x="969.500" y="733.500" width="37.500" height="50.500"/><use href="#pin-u" x="936" y="773" width="37.500" height="50.500"/><use href="#pin-p" x="956" y="793" width="37.500" height="50.500"/><use href="#pin-u" x="1087" y="748" width="37.500" height="50.500"/><use href="#pin-p" x="1135.500" y="740.500" width="37.500" height="50.500"/><use href="#pin-h" x="1119" y="791" width="37.500" height="50.500"/><use href="#pin-u" x="1142" y="823.500" width="37.500" height="50.500"/><use href="#pin-h" x="875" y="837" width="37.500" height="50.500"/><use href="#pin-u" x="799.500" y="848" width="37.500" height="50.500"/><use href="#pin-u" x="622" y="975" width="37.500" height="50.500"/><use href="#pin-p" x="722" y="995" width="37.500" height="50.500"/><use href="#pin-h" x="719.500" y="1037.500" width="37.500" height="50.500"/>
              </g>

              <!-- navigation controls -->
              <path d="M472 752H476.500V1054H472Z" fill="#fff" stroke="#8d8d8d" stroke-width="1.200"/>
              <g fill="#fff" stroke="#b5b5b5" stroke-width=".8" filter="url(#drop)"><circle cx="474" cy="568.500" r="41.500"/><rect x="460" y="648.500" width="27.500" height="56" rx="2"/><rect x="460" y="725" width="28" height="27.500" rx="2"/><rect x="460" y="849" width="28" height="13.500" rx="2"/><rect x="460" y="1052" width="28" height="27.500" rx="2"/></g>
              <path d="M465 545L474 537L483 545M465 592L474 600L483 592M451 560L443 568.500L451 577M497 560L505 568.500L497 577" fill="none" stroke="#969696" stroke-width="4.600"/>
              <path d="M467 738.700H480.500M473.700 732V745.500M467 855.500H480.500M467 1066H480.500" stroke="#6e6e6e" stroke-width="2.800"/>
              <path d="M466 668Q466 665 469 665H479Q482 665 482 668V682H479V695H469V682H466Z" fill="#f2a400" stroke="#b5651d" stroke-width="1"/><circle cx="474" cy="660.500" r="4.800" fill="#f2a400" stroke="#b5651d"/><path d="M470 665L474 671L478 665Z" fill="#c95a00"/>
              <g fill="none" stroke="#000" stroke-width="3.200"><path d="M518.500 1249.500V1289.500M518.500 1269.500H709M674 1249.500V1269.500M707.500 1269.500V1289.500"/></g>
              <g class="scale"><text x="529" y="1256" textLength="50">500 m</text><text x="529" y="1295.500" textLength="55">2000 ft</text></g>
              <text class="glogo" x="405" y="1279" textLength="99">Google</text>
            </svg>
            <div class="map-types"><b>Map</b><span>Satellite</span><span>OSM</span></div>
            <div class="credits"><span class="data">Map data ©2013 Google - <u>Terms of Use</u></span><span class="report">Report a map error</span></div>
          </div>
        </div>
      </section>

      <section class="box route">
        <div class="addr"><label>Address 1:</label><input class="field long"><svg class="mv" viewBox="0 0 28 28"><rect width="28" height="28" fill="#489ff2"/><path d="M4 6H24L14 22Z" fill="#fff"/></svg><span class="bar">|</span></div>
        <div class="addr"><label>Address 2:</label><input class="field long"><svg class="mv" viewBox="0 0 28 28"><rect width="28" height="28" fill="#489ff2"/><path d="M4 6H24L14 22Z" fill="#fff"/></svg><span class="bar">|</span><svg class="mv up" viewBox="0 0 28 28"><rect width="28" height="28" fill="#489ff2"/><path d="M4 22H24L14 6Z" fill="#fff"/></svg></div>
        <div class="opt o1"><svg class="check"><use href="#check-on"/></svg><label>Walking route</label></div>
        <div class="opt o2"><svg class="check"><use href="#check-off"/></svg><label class="drive">Driving route</label><svg class="check"><use href="#check-dim"/></svg><label>Avoid highways</label></div>
        <div class="opt o3"><button class="btn b-reset">Reset directions</button><button class="btn b-get">Get directions</button></div>
      </section>
    </div>
  </main>
</div>
</body>
</html>
```
FILE: styles.css
```css
* { box-sizing: border-box; }
body { margin: 0; background: #fff; color: #494949; font: 24px/28px "DejaVu Sans", Verdana, sans-serif; }
.defs { position: absolute; }
.page { width: 1880px; height: 1798px; overflow: hidden; }

.header { height: 178px; display: flex; border-top: 2px solid #dce8f5; background: linear-gradient(#0b4cab 0, #1a66b8 4px, #2385c5 16px, #2484c4 30px, #49a8e3 160px, #3b95df 166px, #1a73d6 176px); }
.logo { margin: 42px 0 0 8px; flex: none; }
.head-main { margin-left: 42px; }
.nav-row { display: flex; gap: 72px; margin: 0; padding: 0; list-style: none; color: #fff; white-space: nowrap; letter-spacing: -.1px; }
.nav-row li { display: flex; flex-direction: column; align-items: center; }
.nav-row svg { width: 34px; height: 24px; display: block; }
.first { height: 56px; }
.second { height: 58px; letter-spacing: -.16px; }
.nav-row.second svg { background: #2583c2; border-top: 2px solid #b9d6ef; height: 24px; }
.nav-row.first li { line-height: 25px; }
.second li { line-height: 28px; }
h1 { margin: -2px 0 0 -4px; font: bold 40px/42px "Liberation Sans", Arial, sans-serif; letter-spacing: .2px; color: #fff; text-shadow: 0 3px 4px #1c62a8; white-space: nowrap; }

.band { height: 66px; padding-left: 10px; background: linear-gradient(#2a86dc, #4aa5e6 70%, #0d55c8 64px, #fff 64px); }
.band-panel { height: 66px; display: flex; justify-content: space-between; border: solid #fff; border-width: 3px 0 2px 2px; border-top-left-radius: 4px; background: linear-gradient(#d4ebf9 80%, #c3dbf5); }
.corner-l { width: 80px; background: linear-gradient(90deg, #b6dbf4, #cbe6f9); }
.corner-r { width: 36px; background: linear-gradient(90deg, #cbe5f8, #b6dbf4); }

.content { padding-left: 10px; background: linear-gradient(#b7d6e4, #b8d4f0 120px, #e4edf9 400px, #eef3fb 700px); }
.content-panel { height: 1554px; padding: 40px 6px 0 50px; border-left: 2px solid #fff; background: linear-gradient(#ebf2fa, #edf2fa 50px, #fff 190px); }
.box { border-top: 2px solid #ccc; background: #d3eaf8; margin-bottom: 4px; }
.row { display: flex; align-items: center; white-space: nowrap; }
.row label, .row span, .row button, .row input { flex: none; }
.row label, .hint { padding-top: 1px; }
.field { font: inherit; color: inherit; height: 42px; padding: 0 4px; background: #fff; border: 2px solid #ddd; border-top: 3px solid #bfbfbf; border-radius: 0; box-shadow: inset 0 3px 3px #e6e6e6; outline: 0; }
.btn { font: 22px/32px "Open Sans", sans-serif; letter-spacing: .5px; color: #444; height: 34px; padding: 1px 0 0; border: 1px solid #7d8287; border-radius: 7px; background: linear-gradient(#fff, #f3f3f3 50%, #e9e9e9 52%, #f6f6f6); box-shadow: 0 1px 1px #9ab; white-space: nowrap; }

.search { height: 152px; padding-top: 10px; }
.r1 { padding-left: 422px; height: 42px; }
.r1 label { width: 282px; }
.near { width: 346px; letter-spacing: -.5px; }
.hint { margin-left: 13px; letter-spacing: .07px; }
.r2 { padding-left: 803px; margin-top: 8px; }
.locate { width: 206px; }
.r3 { padding-left: 373px; margin-top: 10px; height: 36px; }
.l-radius { width: 232px; }
.l-type { width: 108px; margin-left: 22px; }
.l-show { width: 78px; margin-left: 22px; }
.select { width: 148px; height: 34px; display: flex; align-items: center; justify-content: space-between; padding: 0 13px 2px 15px; font-family: "Open Sans", sans-serif; font-size: 22px; color: #000; border: 1px solid #7d8287; border-radius: 7px; background: linear-gradient(#fff, #f3f3f3 50%, #e9e9e9 52%, #f6f6f6); box-shadow: 0 1px 2px #89a; }
.select.wide { width: 160px; padding-left: 13px; }
.select svg { width: 9px; height: 17px; }
.go { width: 102px; margin-left: 50px; }

.types { height: 90px; display: flex; padding: 7px 0 0 185px; }
.type { display: flex; align-items: flex-end; height: 69px; white-space: nowrap; letter-spacing: -.3px; }
.pin { width: 46px; height: 62px; flex: none; }
.type .pin { margin-bottom: 7px; }
.check { width: 26px; height: 30px; flex: none; margin-right: -2px; }
.type .check { margin-left: 17px; }
.t1 label { width: 185px; }
.t2 { margin-left: 356px; }
.t2 label { width: 151px; }
.t2 .check { margin-left: 17px; }
.t3 { margin-left: 342px; }
.t3 label { width: 157px; }

.mapbox { height: 1026px; }
.reset-row { height: 58px; padding: 4px 0 0 824px; }
.reset { display: block; width: 164px; height: 42px; border: 2px solid #ddd; background: #419fda; color: #fff; font-weight: bold; letter-spacing: -.4px; line-height: 39px; text-align: center; text-decoration: underline; text-decoration-thickness: 2px; }
.split { display: flex; padding-left: 6px; gap: 12px; height: 960px; }
.list { width: 400px; height: 960px; overflow: hidden; font-size: 22px; line-height: 26px; letter-spacing: .55px; font-kerning: none; white-space: nowrap; }
.list h2 { height: 76px; margin: 0; padding: 0 0 3px 4px; display: flex; align-items: center; gap: 4px; border: 2px solid #ddd; background: #419fda; color: #fff; font-size: 24px; letter-spacing: -.1px; }
.list h2 .pin { width: 46px; height: 64px; }
.item { padding: 6px 4px 2px; border-bottom: 2px solid #ccc; }

.map { position: relative; width: 1388px; height: 960px; overflow: hidden; }
.tiles { width: 1388px; height: 960px; display: block; }
.lbl text, .shield text { font-family: Roboto, sans-serif; paint-order: stroke; stroke-linejoin: round; stroke: #f6f2ec; stroke-opacity: .85; stroke-width: 3.5px; }
.big { font-size: 18px; fill: #6b5c4c; }
.small { font-size: 15px; fill: #7b6e60; }
.area { fill: #5a4a3c; }
.green { font-size: 15px; font-style: italic; fill: #2c5e2c; }
.sea { font-size: 15.5px; font-style: italic; fill: #4d74a6; }
.lbl.sea text { stroke: #c4d5ea; stroke-opacity: .7; }
.road { font-size: 17.5px; fill: #42270f; }
.lbl.road text { stroke: #fffca1; stroke-opacity: 1; stroke-width: 4.5px; }
.street { font-size: 16px; fill: #33261a; }
.lbl.street text { stroke: #fff; stroke-opacity: 1; }
.shield rect { fill: #fddb3a; stroke: #d9ab2a; stroke-width: 1.2px; }
.shield text { font-size: 15px; fill: #33260a; stroke: none; }
.scale { font: 18px "Liberation Sans", Arial, sans-serif; fill: #000; }
.glogo { font: 35px "Liberation Serif", serif; fill: #fff; paint-order: stroke; stroke: #8d8d8d; stroke-width: 1.6px; filter: drop-shadow(.8px 1px .5px #777); }
.map-types { position: absolute; left: 1078px; top: 10px; width: 299px; height: 48px; display: grid; grid-template-columns: 80px 128px 1fr; border: 2px solid #717b87; background: #fff; color: #333; font: 26px/41px "Liberation Sans", Arial, sans-serif; text-align: center; box-shadow: 0 3px 5px rgba(0,0,0,.4); }
.map-types b { color: #000; }
.map-types span { border-left: 2px solid #717b87; }
.credits { position: absolute; right: 0; bottom: 0; height: 38px; display: flex; align-items: center; font: 20px/38px "Liberation Sans", Arial, sans-serif; color: #444; white-space: nowrap; background: linear-gradient(90deg, rgba(245,245,245,0), rgba(245,245,245,.75) 60px); padding-left: 60px; }
.data { width: 374px; letter-spacing: .42px; }
.report { width: 180px; height: 37px; border: 2px solid #ddd; background: #f5f5f5; font-weight: bold; font-size: 17px; letter-spacing: .55px; line-height: 33px; text-align: center; }

.route { height: 260px; padding-top: 10px; }
.addr { display: flex; height: 42px; margin-bottom: 8px; padding-left: 411px; align-items: center; white-space: nowrap; }
.addr label { width: 131px; flex: none; letter-spacing: -.1px; }
.long { width: 766px; flex: none; }
.mv { width: 28px; height: 28px; margin: 4px 0 0 12px; flex: none; }
.bar { width: 26px; padding-left: 8px; flex: none; }
.mv.up { margin-left: 0; }
.opt { display: flex; align-items: center; white-space: nowrap; height: 40px; }
.o1 { padding-left: 801px; margin-top: 16px; }
.opt .check { margin: -4px 19px 0 0; }
.o2 { padding-left: 670px; }
.drive { width: 196px; }
.o3 { padding-left: 707px; align-items: flex-start; margin-top: 16px; gap: 18px; }
.b-reset { width: 200px; }
.b-get { width: 181px; }
```
